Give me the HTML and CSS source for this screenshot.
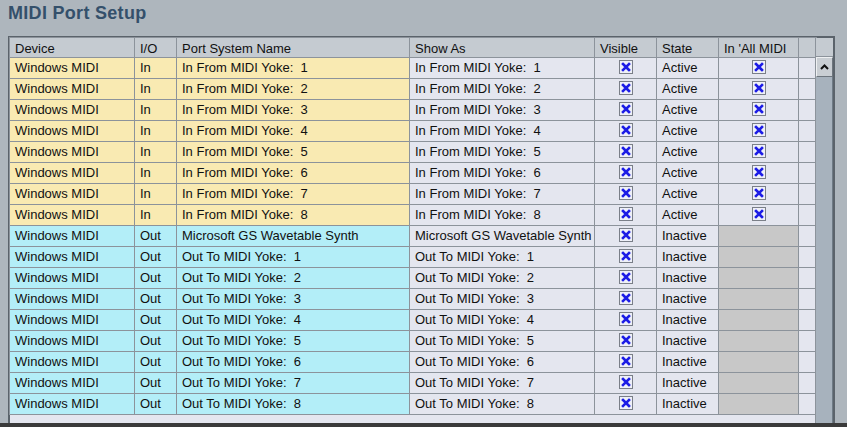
FILE: index.html
```html
<!DOCTYPE html>
<html lang="en">
<head>
  <meta charset="UTF-8" />
  <title>MIDI Port Setup</title>
  <link rel="stylesheet" href="styles.css">
</head>
<body>
  <div class="window">
    <h1 class="title">MIDI Port Setup</h1>

    <div class="panel">
      <div class="grid-wrap">
        <table class="ports">
          <colgroup>
            <col style="width:125px">
            <col style="width:42px">
            <col style="width:233px">
            <col style="width:185px">
            <col style="width:62px">
            <col style="width:62px">
            <col style="width:80px">
            <col style="width:18px">
          </colgroup>
          <thead>
            <tr>
              <th>Device</th>
              <th>I/O</th>
              <th>Port System Name</th>
              <th>Show As</th>
              <th>Visible</th>
              <th>State</th>
              <th>In 'All MIDI</th>
              <th></th>
            </tr>
          </thead>
          <tbody id="rows">
            <!-- rows are filled in by the script below -->
          </tbody>
        </table>
        <div class="grid-foot"></div>
      </div>

      <div class="vscroll">
        <div class="vscroll-cap"></div>
        <div class="vscroll-btn">
          <svg width="9" height="6" viewBox="0 0 9 6"><path d="M1 5 L4.5 1.5 L8 5" fill="none" stroke="#111" stroke-width="2"/></svg>
        </div>
        <div class="vscroll-track"></div>
      </div>
    </div>
  </div>
  <div class="statusbar"></div>

  <script>
    const tick = '<span class="check"><svg width="10" height="10" viewBox="0 0 10 10"><path d="M2 2 L8 8 M8 2 L2 8" stroke="#1c1ce6" stroke-width="2.6" stroke-linecap="square"/></svg></span>';

    const ports = [];
    for (let i = 1; i <= 8; i++) {
      ports.push({ io: 'In', name: 'In From MIDI Yoke:  ' + i, state: 'Active', all: true });
    }
    ports.push({ io: 'Out', name: 'Microsoft GS Wavetable Synth', state: 'Inactive', all: null });
    for (let i = 1; i <= 8; i++) {
      ports.push({ io: 'Out', name: 'Out To MIDI Yoke:  ' + i, state: 'Inactive', all: null });
    }

    const body = document.getElementById('rows');
    ports.forEach(p => {
      const tr = document.createElement('tr');
      tr.className = p.io === 'In' ? 'row-in' : 'row-out';
      tr.innerHTML = `<td class="dev">Windows MIDI</td><td class="dev">${p.io}</td><td class="dev">${p.name}</td><td>${p.name}</td><td class="center">${tick}</td><td>${p.state}</td><td class="center ${p.all ? '' : 'off'}">${p.all ? tick : ''}</td><td></td>`;
      body.appendChild(tr);
    });
  </script>
</body>
</html>
```

FILE: styles.css
```css
:root {
  --bg: #aeb6bd;
  --grid: #8c939b;
  --frame: #5b636b;
  --cell: #e4e6ef;
  --in: #f9eab2;
  --out: #b3eef8;
  --head: #c5cbd1;
}

* {
  box-sizing: border-box;
}

html, body {
  margin: 0;
  height: 100%;
}

body {
  background: var(--bg);
  font-family: "Liberation Sans", Arial, sans-serif;
  color: #111;
  overflow: hidden;
  display: flex;
  flex-direction: column;
}

.window {
  flex: 1;
  padding-left: 8px;
}

.title {
  margin: 0;
  height: 36px;
  padding-top: 3px;
  font-size: 18px;
  font-weight: bold;
  color: #34506b;
  letter-spacing: 0.3px;
}

.panel {
  display: flex;
  width: 827px;
  border-top: 2px solid var(--frame);
  border-left: 2px solid var(--frame);
  border-right: 2px solid var(--frame);
}

.grid-wrap {
  width: 805px;
  background: var(--cell);
}

.ports {
  border-collapse: collapse;
  table-layout: fixed;
  width: 807px;
  margin-left: -1px;
  margin-top: -1px;
  font-size: 13px;
}

.ports th,
.ports td {
  border: 1px solid var(--grid);
  padding: 0 0 0 5px;
  text-align: left;
  white-space: pre;
  overflow: hidden;
  font-weight: normal;
}

.ports th {
  height: 20px;
  background: var(--head);
  padding-top: 1px;
}

.ports td {
  height: 21px;
  padding-bottom: 2px;
  background: var(--cell);
}

.row-in td.dev {
  background: var(--in);
}

.row-out td.dev {
  background: var(--out);
}

.ports td.center {
  text-align: center;
  padding: 0 0 3px;
  line-height: 0;
}

.ports td.off {
  background: #c8c8c8;
}

.check {
  display: inline-flex;
  align-items: center;
  justify-content: center;
  width: 14px;
  height: 14px;
  border: 1px solid #7a7f88;
  background: #eef0f8;
  vertical-align: middle;
}

.grid-foot {
  height: 8px;
}

.vscroll {
  width: 18px;
  display: flex;
  flex-direction: column;
  border-left: 1px solid var(--grid);
}

.vscroll-cap {
  height: 19px;
  background: var(--head);
  border-bottom: 1px solid var(--grid);
}

.vscroll-btn {
  height: 20px;
  background: #c9ced3;
  border: 1px solid #6d757d;
  border-top-color: #eef0f2;
  border-left-color: #eef0f2;
  display: flex;
  align-items: center;
  justify-content: center;
}

.vscroll-track {
  flex: 1;
  background: #a7b2bd;
  border-right: 1px solid #6f7b86;
}

.statusbar {
  height: 5px;
  background: #3a3a3a;
}
```
